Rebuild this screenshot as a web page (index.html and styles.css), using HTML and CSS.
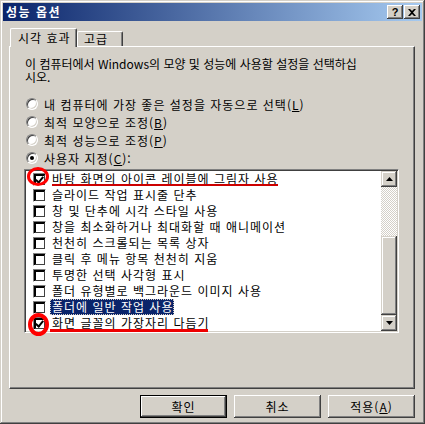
FILE: index.html
```html
<!DOCTYPE html>
<html lang="ko">
<head>
<meta charset="utf-8">
<title>성능 옵션</title>
<link rel="stylesheet" href="styles.css">
</head>
<body>
<div class="window">
  <div class="titlebar">
    <span class="title">성능 옵션</span>
    <div class="tbtns">
      <span class="tbtn help">?</span>
      <span class="tbtn close"><svg width="8" height="7" viewBox="0 0 8 7"><path d="M0 0h2l2 2 2-2h2L5 3.5 8 7H6L4 5 2 7H0l3-3.5z" fill="#000"/></svg></span>
    </div>
  </div>
  <div class="body">
    <div class="tabs">
      <div class="tab active">시각 효과</div>
      <div class="tab">고급</div>
    </div>
    <div class="panel">
      <p class="desc">이 컴퓨터에서 Windows의 모양 및 성능에 사용할 설정을 선택하십<br>시오.</p>
      <div class="radios">
        <div class="radio-row"><span class="radio"></span><span>내 컴퓨터에 가장 좋은 설정을 자동으로 선택(<u>L</u>)</span></div>
        <div class="radio-row"><span class="radio"></span><span>최적 모양으로 조정(<u>B</u>)</span></div>
        <div class="radio-row"><span class="radio"></span><span>최적 성능으로 조정(<u>P</u>)</span></div>
        <div class="radio-row"><span class="radio on"></span><span>사용자 지정(<u>C</u>):</span></div>
      </div>
      <div class="listbox">
        <ul class="items">
          <li><span class="cb checked"></span><span class="label">바탕 화면의 아이콘 레이블에 그림자 사용</span></li>
          <li><span class="cb"></span><span class="label">슬라이드 작업 표시줄 단추</span></li>
          <li><span class="cb"></span><span class="label">창 및 단추에 시각 스타일 사용</span></li>
          <li><span class="cb"></span><span class="label">창을 최소화하거나 최대화할 때 애니메이션</span></li>
          <li><span class="cb"></span><span class="label">천천히 스크롤되는 목록 상자</span></li>
          <li><span class="cb"></span><span class="label">클릭 후 메뉴 항목 천천히 지움</span></li>
          <li><span class="cb"></span><span class="label">투명한 선택 사각형 표시</span></li>
          <li><span class="cb"></span><span class="label">폴더 유형별로 백그라운드 이미지 사용</span></li>
          <li><span class="cb"></span><span class="label selected">폴더에 일반 작업 사용</span></li>
          <li><span class="cb checked"></span><span class="label">화면 글꼴의 가장자리 다듬기</span></li>
        </ul>
        <div class="scrollbar">
          <div class="sbtn"><svg width="7" height="4" viewBox="0 0 7 4"><path d="M3.5 0L7 4H0z" fill="#000"/></svg></div>
          <div class="track"></div>
          <div class="thumb"></div>
          <div class="sbtn"><svg width="7" height="4" viewBox="0 0 7 4"><path d="M0 0h7L3.5 4z" fill="#000"/></svg></div>
        </div>
      </div>
    </div>
    <div class="buttons">
      <div class="btn default"><span>확인</span></div>
      <div class="btn"><span>취소</span></div>
      <div class="btn"><span>적용(<u>A</u>)</span></div>
    </div>
  </div>
  <div class="mark ring ring1"></div>
  <div class="mark line line1"></div>
  <div class="mark ring ring2"></div>
  <div class="mark line line2"></div>
</div>
</body>
</html>
```
FILE: styles.css
```css
* { box-sizing: border-box; }
html, body { margin: 0; padding: 0; background: #d4d0c8; }
body {
  font-family: "Noto Sans CJK KR", "Liberation Sans", sans-serif;
  font-size: 12px;
  color: #000;
}
.window {
  position: relative;
  width: 425px;
  height: 424px;
  padding: 3px;
  background: #d4d0c8;
  box-shadow: inset -1px -1px #404040, inset 1px 1px #d4d0c8, inset -2px -2px #808080, inset 2px 2px #fff;
  overflow: hidden;
}
.titlebar {
  height: 18px;
  display: flex;
  align-items: center;
  justify-content: space-between;
  padding: 0 2px 0 3px;
  background: linear-gradient(to right, #0a246a, #a6caf0);
}
.title {
  color: #fff;
  font-weight: bold;
  font-size: 12px;
  line-height: 18px;
  letter-spacing: 1.5px;
}
.tbtns { display: flex; gap: 1px; }
.tbtn {
  width: 16px;
  height: 14px;
  display: flex;
  align-items: center;
  justify-content: center;
  background: #d4d0c8;
  box-shadow: inset -1px -1px #404040, inset 1px 1px #fff, inset -2px -2px #808080;
  font-family: "Liberation Sans", sans-serif;
  font-weight: bold;
  font-size: 11px;
  line-height: 14px;
}
.body { padding: 6px 7px 0 6px; }
.tabs {
  display: flex;
  align-items: flex-end;
  height: 19px;
  position: relative;
  z-index: 2;
  letter-spacing: 1px;
}
.tab {
  height: 15px;
  padding: 0 0 0 6px;
  width: 46px;
  border-top: 1px solid #fff;
  border-left: 1px solid #fff;
  border-right: 1px solid #404040;
  border-radius: 2px 2px 0 0;
  box-shadow: inset -1px 0 #808080;
  line-height: 14px;
  background: #d4d0c8;
}
.tab.active {
  height: 19px;
  width: 67px;
  margin-left: 1px;
  margin-bottom: -1px;
  padding-left: 7px;
  line-height: 18px;
}
.panel {
  height: 343px;
  padding: 10px 0 0 14px;
  border-top: 1px solid #fff;
  border-left: 1px solid #fff;
  border-right: 1px solid #404040;
  border-bottom: 1px solid #404040;
  box-shadow: inset -1px -1px #808080;
}
.desc {
  margin: 0 0 0 1px;
  line-height: 13px;
  white-space: nowrap;
}
.radios { margin-top: 12px; letter-spacing: 1px; }
.radio-row {
  height: 18px;
  display: flex;
  align-items: center;
  gap: 6px;
  padding-left: 2px;
}
.radio {
  width: 12px;
  height: 12px;
  border-radius: 50%;
  background: #fff;
  border: 1px solid;
  border-color: #808080 #fff #fff #808080;
  box-shadow: inset 1px 1px #404040, inset -1px -1px #d4d0c8;
  position: relative;
  flex: none;
}
.radio.on::after {
  content: "";
  position: absolute;
  left: 3px;
  top: 3px;
  width: 4px;
  height: 4px;
  border-radius: 50%;
  background: #000;
}
.listbox {
  margin-top: 2px;
  width: 375px;
  height: 164px;
  display: flex;
  background: #fff;
  border: 1px solid;
  border-color: #808080 #fff #fff #808080;
  box-shadow: inset 1px 1px #404040, inset -1px -1px #d4d0c8;
  padding: 1px;
}
.items {
  list-style: none;
  margin: 0;
  padding: 0;
  flex: 1;
  overflow: hidden;
  letter-spacing: 1px;
}
.items li {
  height: 16px;
  display: flex;
  align-items: center;
  padding-left: 7px;
  white-space: nowrap;
}
.cb {
  width: 13px;
  height: 13px;
  flex: none;
  background: #fff;
  border: 1px solid;
  border-color: #808080 #fff #fff #808080;
  box-shadow: inset 1px 1px #000, inset -1px -1px #404040, inset 2px 2px #000;
  margin-right: 4px;
  position: relative;
}
.cb.checked::after {
  content: "";
  position: absolute;
  left: 3px;
  top: 1px;
  width: 3px;
  height: 6px;
  border: solid #000;
  border-width: 0 2px 2px 0;
  transform: rotate(40deg);
}
.label {
  padding: 0 1px 0 2px;
  line-height: 16px;
  height: 16px;
}
.label.selected {
  background: #0a246a;
  color: #fff;
  outline: 1px dotted #d4d0c8;
  outline-offset: -1px;
}
.scrollbar {
  width: 16px;
  display: flex;
  flex-direction: column;
  flex: none;
}
.sbtn {
  height: 16px;
  flex: none;
  display: flex;
  align-items: center;
  justify-content: center;
  background: #d4d0c8;
  box-shadow: inset -1px -1px #404040, inset 1px 1px #d4d0c8, inset -2px -2px #808080, inset 2px 2px #fff;
}
.track {
  height: 49px;
  flex: none;
  background: repeating-conic-gradient(#fff 0 25%, #d4d0c8 0 50%) 0 0 / 2px 2px;
}
.thumb {
  flex: 1;
  background: #d4d0c8;
  box-shadow: inset -1px -1px #404040, inset 1px 1px #d4d0c8, inset -2px -2px #808080, inset 2px 2px #fff;
}
.buttons {
  display: flex;
  justify-content: flex-end;
  gap: 7px;
  margin-top: 6px;
  letter-spacing: 1px;
}
.btn {
  width: 87px;
  height: 23px;
  display: flex;
  align-items: center;
  justify-content: center;
  background: #d4d0c8;
  box-shadow: inset -1px -1px #404040, inset 1px 1px #fff, inset -2px -2px #808080, inset 2px 2px #d4d0c8;
  line-height: 14px;
}
.btn.default {
  border: 1px solid #000;
}
.mark { position: absolute; pointer-events: none; }
.ring {
  border: 3px solid #f00;
  border-radius: 50%;
}
.ring1 { left: 27px; top: 167px; width: 22px; height: 19px; }
.ring2 { left: 28px; top: 313px; width: 21px; height: 23px; border-width: 4px; }
.line { background: #c00; }
.line1 { left: 52px; top: 184px; width: 226px; height: 2px; }
.line2 { left: 50px; top: 329px; width: 158px; height: 3px; background: #e00; }
```
